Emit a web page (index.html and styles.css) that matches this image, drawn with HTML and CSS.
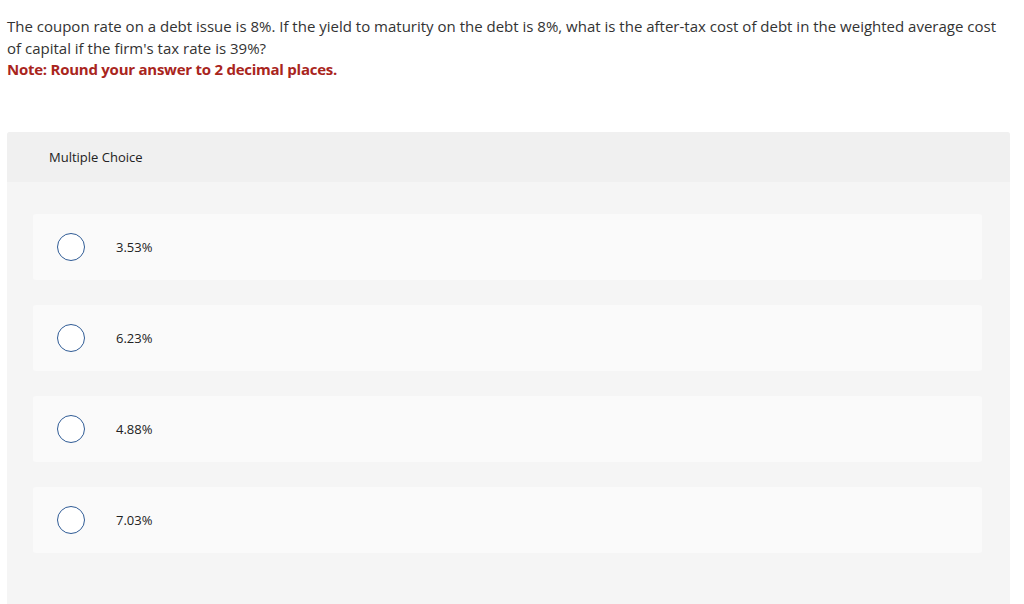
FILE: index.html
```html
<!DOCTYPE html>
<html>
<head>
<meta charset="utf-8">
<link rel="stylesheet" href="styles.css">
</head>
<body>
<div class="question">
  <p class="prompt">The coupon rate on a debt issue is 8%. If the yield to maturity on the debt is 8%, what is the after-tax cost of debt in the weighted average cost of capital if the firm's tax rate is 39%?</p>
  <p class="note">Note: Round your answer to 2 decimal places.</p>
</div>
<div class="mc">
  <div class="mc-header">Multiple Choice</div>
  <div class="mc-body">
    <div class="option"><span class="radio"></span><span class="label">3.53%</span></div>
    <div class="option"><span class="radio"></span><span class="label">6.23%</span></div>
    <div class="option"><span class="radio"></span><span class="label">4.88%</span></div>
    <div class="option"><span class="radio"></span><span class="label">7.03%</span></div>
  </div>
</div>
</body>
</html>
```
FILE: styles.css
```css
html, body {
  margin: 0;
  padding: 0;
  background: #fff;
}
body {
  font-family: "Open Sans", "Liberation Sans", sans-serif;
  color: #333;
  padding: 16px 8px 0 7px;
}
.question {
  font-size: 15px;
  line-height: 21.5px;
  padding-right: 9px;
}
.prompt, .note {
  margin: 0;
}
.note {
  color: #a9251d;
  font-weight: 700;
  letter-spacing: -0.25px;
}
.mc {
  margin-top: 51px;
  background: #f5f5f5;
  border-radius: 3px 3px 0 0;
  width: 1003px;
}
.mc-header {
  height: 50px;
  background: #f0f0f0;
  border-radius: 3px 3px 0 0;
  display: flex;
  align-items: center;
  padding-left: 42px;
  font-size: 13px;
  color: #222;
}
.mc-body {
  padding: 32px 28px 60px 26px;
  display: flex;
  flex-direction: column;
  gap: 25px;
}
.option {
  height: 66px;
  background: #fafafa;
  border-radius: 3px;
  display: flex;
  align-items: center;
}
.radio {
  width: 28px;
  height: 28px;
  border: 1.5px solid #2f5b95;
  border-radius: 50%;
  background: #fff;
  margin-left: 24px;
  box-sizing: border-box;
  flex: none;
}
.label {
  margin-left: 31px;
  font-size: 13px;
  color: #222;
}
```
